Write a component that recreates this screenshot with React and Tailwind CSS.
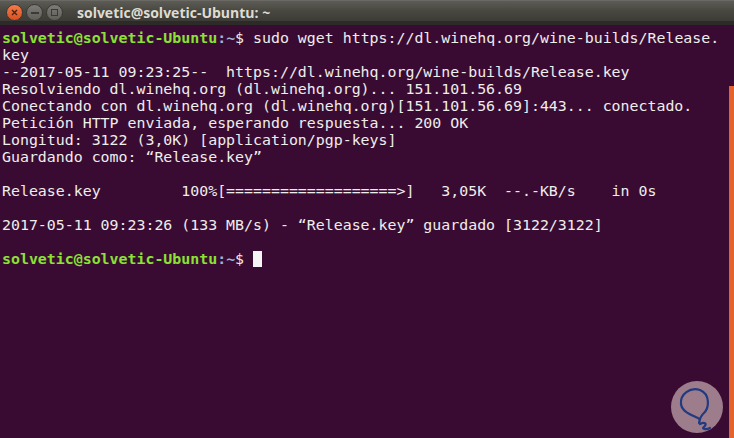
import React from "react";

const lines = [
  "--2017-05-11 09:23:25--  https://dl.winehq.org/wine-builds/Release.key",
  "Resolviendo dl.winehq.org (dl.winehq.org)... 151.101.56.69",
  "Conectando con dl.winehq.org (dl.winehq.org)[151.101.56.69]:443... conectado.",
  "Petición HTTP enviada, esperando respuesta... 200 OK",
  "Longitud: 3122 (3,0K) [application/pgp-keys]",
  "Guardando como: “Release.key”",
  "",
  "Release.key         100%[===================>]   3,05K  --.-KB/s    in 0s",
  "",
  "2017-05-11 09:23:26 (133 MB/s) - “Release.key” guardado [3122/3122]",
  "",
];

function Prompt({ children }) {
  return (
    <div className="whitespace-pre h-[17px]">
      <span className="text-[#8ae234] font-bold">solvetic@solvetic-Ubuntu</span>
      <span className="text-[#9fb4d8] font-bold">:~</span>
      <span>$ </span>
      {children}
    </div>
  );
}

function WindowButtons() {
  return (
    <div className="flex items-center gap-[3px] pl-[6px]">
      <div className="w-[17px] h-[17px] rounded-full bg-gradient-to-b from-[#f37b4a] to-[#d9501e] border border-[#3a3935] flex items-center justify-center">
        <svg width="7" height="7" viewBox="0 0 7 7">
          <path d="M1 1L6 6M6 1L1 6" stroke="#4a2210" strokeWidth="1.4" />
        </svg>
      </div>
      <div className="w-[17px] h-[17px] rounded-full bg-gradient-to-b from-[#7d7c77] to-[#5f5e59] border border-[#3a3935] flex items-center justify-center">
        <div className="w-[8px] h-[2px] bg-[#3b3a36]" />
      </div>
      <div className="w-[17px] h-[17px] rounded-full bg-gradient-to-b from-[#7d7c77] to-[#5f5e59] border border-[#3a3935] flex items-center justify-center">
        <div className="w-[7px] h-[7px] border-[1.5px] border-[#3b3a36]" />
      </div>
    </div>
  );
}

function Watermark() {
  return (
    <svg width="54" height="54" viewBox="0 0 54 54">
      <circle cx="27" cy="27" r="26" fill="#9d7d8c" />
      <path
        d="M30 44 C34 42 38 43 34 47 C31 49 36 50 40 48 M29 43 C30 38 31 36 33 34 C40 28 40 14 30 10 C20 7 10 14 11 24 C12 32 22 35 28 38 C30 39 30 41 29 43"
        fill="none"
        stroke="#223a80"
        strokeWidth="2.2"
        strokeLinecap="round"
      />
    </svg>
  );
}

export default function App() {
  return (
    <div className="w-[734px] h-[438px] overflow-hidden flex flex-col bg-[#3a0b32]">
      {/* Title bar */}
      <div className="h-[25px] shrink-0 bg-gradient-to-b from-[#5c5b56] via-[#48473f] to-[#3c3b37] border-t border-[#6a6964] border-b-[4px] border-b-[#2c2b28] flex items-center pt-[3px]">
        <WindowButtons />
        <span className="ml-[14px] text-[14px] font-bold text-[#dfdbd2] [font-family:'Open_Sans','Noto_Sans',sans-serif] leading-none">
          solvetic@solvetic-Ubuntu: ~
        </span>
      </div>

      <div className="flex flex-1 min-h-0">
        {/* Terminal output */}
        <div className="flex-1 relative pl-[2px] pt-[5px] text-[14.9px] leading-[17px] text-[#eeeeec] [font-family:'DejaVu_Sans_Mono',monospace]">
          <Prompt>sudo wget https://dl.winehq.org/wine-builds/Release.</Prompt>
          <div className="whitespace-pre h-[17px]">key</div>
          {lines.map((line, i) => (
            <div key={i} className="whitespace-pre h-[17px]">
              {line}
            </div>
          ))}
          <Prompt>
            <span className="inline-block w-[9px] h-[16px] bg-[#f5f5f5] align-[-3px]" />
          </Prompt>

          <div className="absolute right-[5px] bottom-[4px]">
            <Watermark />
          </div>
        </div>

        {/* Scrollbar */}
        <div className="w-[5px] flex flex-col">
          <div className="h-[61px]" />
          <div className="flex-1 bg-[#e5632b]" />
        </div>
      </div>
    </div>
  );
}
